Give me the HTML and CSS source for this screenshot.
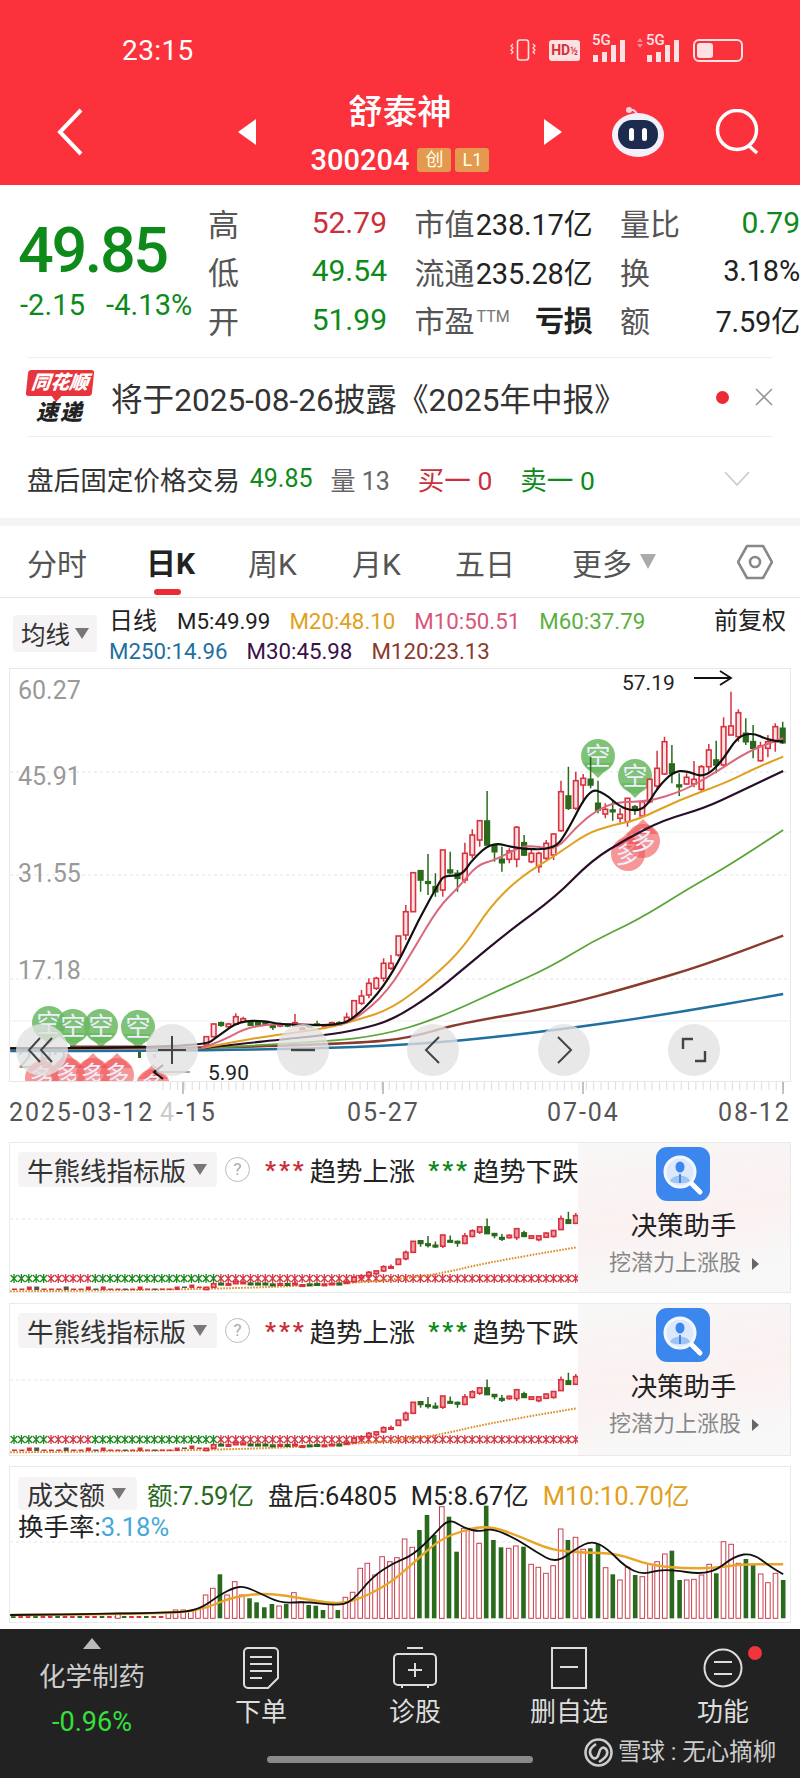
FILE: index.html
```html
<!DOCTYPE html>
<html lang="zh-CN">
<head>
  <meta charset="UTF-8">
  <title>舒泰神 300204</title>
  <link rel="stylesheet" href="styles.css">
</head>
<body>
<div class="screen">

  <header class="topbar">
    <div class="status">
      <span class="clock">23:15</span>
      <div class="status-icons">
        <svg width="26" height="24" viewBox="0 0 26 24" fill="none" stroke="#fde2e4" stroke-width="1.6"><rect x="7.5" y="2" width="11" height="20" rx="2.5"/><path d="M3 6l-2 2 2 2-2 2 2 2-2 2M23 6l2 2-2 2 2 2-2 2 2 2" stroke-width="1.2"/></svg>
        <span class="hd">HD<small>½</small></span>
        <div class="signal"><b>5G</b><i class="b1"></i><i class="b2"></i><i class="b3"></i><i class="b4"></i></div>
        <div class="signal second"><b>5G</b><i class="b1"></i><i class="b2"></i><i class="b3"></i><i class="b4"></i></div>
        <div class="battery"><span></span></div>
      </div>
    </div>
    <div class="nav">
      <div class="back"><svg width="28" height="48" viewBox="0 0 28 48" fill="none" stroke="#fff" stroke-width="4"><path d="M25 2L4 24l21 22"/></svg></div>
      <svg width="18" height="26" viewBox="0 0 18 26"><path d="M18 0v26L0 13z" fill="#fff"/></svg>
      <div class="stock">
        <div class="stock-name">舒泰神</div>
        <div class="stock-code">300204<span class="tag">创</span><span class="tag">L1</span></div>
      </div>
      <svg width="18" height="26" viewBox="0 0 18 26"><path d="M0 0v26l18-13z" fill="#fff"/></svg>
      <div class="nav-right">
        <svg width="56" height="52" viewBox="0 0 56 52"><path d="M27 9c-1-4-4-6-7-5" stroke="#f6d5da" stroke-width="2" fill="none"/><circle cx="19" cy="4" r="3" fill="#f6d5da"/><ellipse cx="28" cy="29" rx="26" ry="22" fill="#f3f0fb"/><rect x="8" y="14" width="40" height="29" rx="14" fill="#1c2b4e"/><rect x="19" y="22" width="5" height="13" rx="2.5" fill="#fff"/><rect x="32" y="22" width="5" height="13" rx="2.5" fill="#fff"/></svg>
        <svg width="46" height="46" viewBox="0 0 46 46" fill="none" stroke="#fff" stroke-width="3.5"><circle cx="22" cy="21" r="19.5"/><path d="M33 36l9 8"/></svg>
      </div>
    </div>
  </header>

  <section class="quote">
    <div class="price">
      <div class="price-now">49.85</div>
      <div class="price-change"><span>-2.15</span><span>-4.13%</span></div>
    </div>
    <div class="stats">
      <div class="stat"><span class="label big">高</span><span class="val red">52.79</span></div>
      <div class="stat"><span class="label">市值</span><span class="num">238.17亿</span></div>
      <div class="stat"><span class="label">量比</span><span class="val green">0.79</span></div>
      <div class="stat"><span class="label big">低</span><span class="val green">49.54</span></div>
      <div class="stat"><span class="label">流通</span><span class="num">235.28亿</span></div>
      <div class="stat"><span class="label">换</span><span class="num">3.18%</span></div>
      <div class="stat"><span class="label big">开</span><span class="val green">51.99</span></div>
      <div class="stat"><span class="label">市盈<sup>TTM</sup></span><span class="num loss">亏损</span></div>
      <div class="stat"><span class="label">额</span><span class="num">7.59亿</span></div>
    </div>
  </section>

  <section class="notice">
    <div class="notice-logo">
      <div class="logo-top">同花顺</div>
      <div class="logo-bottom">速递</div>
    </div>
    <div class="notice-text">将于2025-08-26披露《2025年中报》</div>
    <span class="red-dot"></span>
    <svg width="18" height="18" viewBox="0 0 18 18" stroke="#999" stroke-width="1.6"><path d="M1 1l16 16M17 1L1 17"/></svg>
  </section>

  <section class="afterhours">
    <span class="ah-title">盘后固定价格交易</span>
    <span class="ah-num green">49.85</span>
    <span class="ah-vol">量 13</span>
    <span class="ah-buy">买一 0</span>
    <span class="ah-sell">卖一 0</span>
    <svg width="26" height="16" viewBox="0 0 26 16" fill="none" stroke="#ccc" stroke-width="1.8"><path d="M1 1l12 13L25 1"/></svg>
  </section>

  <nav class="tabs">
    <span>分时</span>
    <span class="tab-active">日K</span>
    <span>周K</span>
    <span>月K</span>
    <span>五日</span>
    <span class="tab-more">更多<i class="caret"></i></span>
    <svg width="36" height="36" viewBox="0 0 36 36" fill="none" stroke="#888" stroke-width="2.6" stroke-linejoin="round"><path d="M10 2h16l9 16-9 16H10L1 18z"/><circle cx="18" cy="18" r="5"/></svg>
  </nav>

  <section class="legend">
    <div class="chip">均线<i class="caret small"></i></div>
    <div class="legend-rows">
      <div class="legend-row">
        <span class="legend-title">日线</span><span>M5:49.99</span><span class="c-m20">M20:48.10</span><span class="c-m10">M10:50.51</span><span class="c-m60">M60:37.79</span><span class="adjust">前复权</span>
      </div>
      <div class="legend-row">
        <span class="c-m250">M250:14.96</span><span class="c-m30">M30:45.98</span><span class="c-m120">M120:23.13</span>
      </div>
    </div>
  </section>

  <section class="chart">
    <svg id="kline" width="780" height="412" viewBox="10 669 780 412"></svg>
    <div class="chart-buttons">
      <div class="round-btn"><svg width="30" height="30" viewBox="0 0 30 30" fill="none" stroke="#444" stroke-width="2"><path d="M13 3L2 15l11 12M25 3L14 15l11 12"/></svg></div>
      <div class="round-btn"><svg width="30" height="30" viewBox="0 0 30 30" fill="none" stroke="#444" stroke-width="2"><path d="M15 1v28M1 15h28"/></svg></div>
      <div class="round-btn"><svg width="30" height="30" viewBox="0 0 30 30" fill="none" stroke="#444" stroke-width="2.4"><path d="M3 15h24"/></svg></div>
      <div class="round-btn"><svg width="30" height="30" viewBox="0 0 30 30" fill="none" stroke="#444" stroke-width="2"><path d="M21 2L8 15l13 13"/></svg></div>
      <div class="round-btn"><svg width="30" height="30" viewBox="0 0 30 30" fill="none" stroke="#444" stroke-width="2"><path d="M9 2l13 13L9 28"/></svg></div>
      <div class="round-btn"><svg width="30" height="30" viewBox="0 0 30 30" fill="none" stroke="#444" stroke-width="2.4"><path d="M14 4H4v10M16 26h10V16"/></svg></div>
    </div>
  </section>
  <svg id="ticks" class="ticks" width="800" height="13" viewBox="0 0 800 13"></svg>
  <div class="dates">
    <span>2025-03-12</span><span><em>4</em>-15</span><span>05-27</span><span>07-04</span><span>08-12</span>
  </div>

  <section class="panel">
    <svg class="indicator" width="570" height="149" viewBox="0 0 570 149"></svg>
    <div class="panel-head">
      <div class="chip">牛熊线指标版<i class="caret small"></i></div>
      <span class="help">?</span>
      <span class="stars red">***</span><span>趋势上涨</span>
      <span class="stars green">***</span><span>趋势下跌</span>
    </div>
    <aside class="promo">
      <svg width="54" height="54" viewBox="0 0 54 54" class="promo-icon"><rect width="54" height="54" rx="11" fill="#3c87ee"/><circle cx="24" cy="25" r="15" fill="#dbe9fb" stroke="#f4f8fe" stroke-width="3"/><ellipse cx="24" cy="20" rx="4.5" ry="5.5" fill="#3c87ee"/><path d="M14 34c2-7 18-7 20 0-3 3-17 3-20 0z" fill="#9dc2f3"/><path d="M24 27v9" stroke="#3c87ee" stroke-width="2"/><path d="M36 37l8 8" stroke="#fff" stroke-width="5" stroke-linecap="round"/></svg>
      <div class="promo-title">决策助手</div>
      <div class="promo-sub">挖潜力上涨股<i class="arrow-r"></i></div>
    </aside>
  </section>

  <section class="panel tall">
    <svg class="indicator" width="570" height="151" viewBox="0 0 570 151"></svg>
    <div class="panel-head">
      <div class="chip">牛熊线指标版<i class="caret small"></i></div>
      <span class="help">?</span>
      <span class="stars red">***</span><span>趋势上涨</span>
      <span class="stars green">***</span><span>趋势下跌</span>
    </div>
    <aside class="promo">
      <svg width="54" height="54" viewBox="0 0 54 54" class="promo-icon"><rect width="54" height="54" rx="11" fill="#3c87ee"/><circle cx="24" cy="25" r="15" fill="#dbe9fb" stroke="#f4f8fe" stroke-width="3"/><ellipse cx="24" cy="20" rx="4.5" ry="5.5" fill="#3c87ee"/><path d="M14 34c2-7 18-7 20 0-3 3-17 3-20 0z" fill="#9dc2f3"/><path d="M24 27v9" stroke="#3c87ee" stroke-width="2"/><path d="M36 37l8 8" stroke="#fff" stroke-width="5" stroke-linecap="round"/></svg>
      <div class="promo-title">决策助手</div>
      <div class="promo-sub">挖潜力上涨股<i class="arrow-r"></i></div>
    </aside>
  </section>

  <section class="volume">
    <svg id="vol" width="780" height="155" viewBox="10 1467 780 155"></svg>
    <div class="vol-head">
      <div class="vol-line">
        <div class="chip">成交额<i class="caret small"></i></div>
        <span class="c-amount">额:7.59亿</span><span>盘后:64805</span><span>M5:8.67亿</span><span class="c-m20">M10:10.70亿</span>
      </div>
      <div class="vol-rate">换手率:<span>3.18%</span></div>
    </div>
  </section>

  <footer class="footer">
    <div class="sector">
      <i class="sector-up"></i>
      <div class="sector-name">化学制药</div>
      <div class="sector-pct">-0.96%</div>
    </div>
    <div class="foot-item">
      <svg width="36" height="42" viewBox="0 0 36 42" fill="none" stroke="#ddd" stroke-width="2"><path d="M5 1h26a4 4 0 0 1 4 4v26l-10 10H5a4 4 0 0 1-4-4V5a4 4 0 0 1 4-4z"/><path d="M7 10h22M7 17h22M7 24h22M7 31h12"/></svg>
      <span>下单</span>
    </div>
    <div class="foot-item">
      <svg width="44" height="42" viewBox="0 0 44 42" fill="none" stroke="#ddd" stroke-width="2"><path d="M14 1h16M5 7h34a4 4 0 0 1 4 4v23a4 4 0 0 1-4 4H5a4 4 0 0 1-4-4V11a4 4 0 0 1 4-4zM9 39v2M35 39v2"/><path d="M22 16v14M15 23h14"/></svg>
      <span>诊股</span>
    </div>
    <div class="foot-item">
      <svg width="36" height="42" viewBox="0 0 36 42" fill="none" stroke="#ddd" stroke-width="2"><rect x="1" y="1" width="34" height="40"/><path d="M9 20h18"/></svg>
      <span>删自选</span>
    </div>
    <div class="foot-item">
      <svg width="40" height="42" viewBox="0 0 40 42" fill="none" stroke="#ddd" stroke-width="2"><circle cx="20" cy="21" r="18.5"/><path d="M11 15h18M11 27h18"/></svg>
      <span>功能</span>
      <i class="foot-dot"></i>
    </div>
    <div class="watermark">
      <svg width="29" height="29" viewBox="0 0 29 29" fill="none" stroke="#ccc" stroke-width="2.6"><circle cx="14.5" cy="14.5" r="13"/><path d="M12 6C6 10 4 14 8 19c3 3 6 1 7-4s4-7 7-4c3 4 1 8-7 13"/></svg>
      <span>雪球 : 无心摘柳</span>
    </div>
    <div class="home-bar"></div>
  </footer>

</div>
<script src="chart.js"></script>
</body>
</html>
```

FILE: styles.css
```css
* {
  box-sizing: border-box;
}

body {
  margin: 0;
  background: #fff;
  color: #222;
  font-family: Roboto, "Noto Sans CJK SC", sans-serif;
}

.screen {
  width: 800px;
  height: 1778px;
  overflow: hidden;
  position: relative;
}

i {
  font-style: normal;
}

.red { color: #c9303a; }
.green { color: #0d8a1a; }

/* top bar */
.topbar {
  height: 185px;
  background: #fb313b;
  color: #fff;
}

.status {
  height: 100px;
  display: flex;
  align-items: center;
  justify-content: space-between;
  padding: 0 57px 0 122px;
}

.clock {
  font-size: 28px;
  letter-spacing: 0.4px;
}

.status-icons {
  display: flex;
  align-items: center;
  gap: 13px;
  color: #fde2e4;
}

.hd {
  width: 31px;
  height: 21px;
  background: #fde2e4;
  color: #d8303a;
  border-radius: 3px;
  font-size: 14px;
  font-weight: 700;
  line-height: 21px;
  text-align: center;
  white-space: nowrap;
}

.hd small {
  font-size: 10px;
}

.signal {
  position: relative;
  width: 34px;
  height: 24px;
  display: flex;
  align-items: flex-end;
  gap: 4.5px;
}

.signal b {
  position: absolute;
  left: -1px;
  top: -5px;
  font-size: 15px;
  line-height: 15px;
  font-weight: 500;
}

.signal i {
  width: 4.5px;
  background: #fde2e4;
}

.signal.second {
  margin-left: 7px;
}

.signal.second::before,
.signal.second::after {
  content: "";
  position: absolute;
  left: -10px;
  border-left: 3px solid transparent;
  border-right: 3px solid transparent;
}

.signal.second::before {
  top: 0;
  border-bottom: 4px solid #f58a90;
}

.signal.second::after {
  top: 6px;
  border-top: 4px solid #f58a90;
}

.b1 { height: 7px; }
.b2 { height: 10px; }
.b3 { height: 17px; }
.b4 { height: 22px; }

.battery {
  width: 50px;
  height: 23px;
  border: 2px solid #fde2e4;
  border-radius: 6px;
  padding: 2px;
  margin-left: -1px;
}

.battery span {
  display: block;
  width: 16px;
  height: 15px;
  background: #fde2e4;
  border-radius: 3px;
}

.nav {
  height: 85px;
  padding-bottom: 22px;
  display: grid;
  grid-template-columns: 238px 18px 288px 18px 1fr;
  grid-template-rows: 63px;
  align-items: center;
}

.back {
  padding-left: 56px;
  display: flex;
}

.stock {
  text-align: center;
  margin-top: 5px;
}

.stock-name {
  font-size: 34.5px;
  line-height: 44px;
  font-weight: 500;
}

.stock-code {
  font-size: 29px;
  line-height: 36px;
  font-weight: 500;
  display: flex;
  justify-content: center;
  align-items: center;
  gap: 4px;
  margin-top: 8px;
}

.tag {
  width: 34px;
  height: 24px;
  background: #e39a4f;
  border-radius: 3px;
  color: #ffe;
  font-size: 18px;
  font-weight: 400;
  line-height: 24px;
  text-align: center;
}

.tag:first-of-type {
  margin-left: 4px;
}

.nav-right {
  display: flex;
  align-items: center;
  gap: 49px;
  margin-left: 48px;
}

/* quote */
.quote {
  height: 172px;
  display: flex;
  padding: 13px 0 0 18px;
}

.price {
  width: 190px;
  color: #0d8a1a;
  flex: none;
}

.price-now {
  font-size: 63px;
  line-height: 70px;
  letter-spacing: -2.4px;
  font-weight: 500;
  margin-top: 18px;
}

.price-change {
  font-size: 29px;
  line-height: 34px;
  display: flex;
  gap: 21px;
  margin: 2px 0 0 2px;
  white-space: nowrap;
  letter-spacing: 0.1px;
}

.stats {
  width: 592px;
  display: grid;
  grid-template-columns: 179px 178px 180px;
  grid-auto-rows: 48.5px;
  column-gap: 27.5px;
}

.stat {
  display: flex;
  justify-content: space-between;
  align-items: center;
  white-space: nowrap;
}

.label {
  font-size: 30px;
  color: #555;
}

.label.big {
  font-size: 31px;
}

.label sup {
  font-size: 16px;
  color: #777;
  vertical-align: 10px;
  line-height: 0;
  margin-left: 2px;
}

.val {
  font-size: 30px;
}

.num {
  font-size: 29px;
  color: #222;
  letter-spacing: -0.2px;
}

.num.loss {
  font-weight: 700;
  font-size: 29px;
}

/* notice */
.notice {
  height: 80px;
  margin: 0 27px;
  border-top: 1px solid #eee;
  border-bottom: 1px solid #eee;
  display: flex;
  align-items: center;
}

.notice-logo {
  width: 66px;
  text-align: center;
  font-style: italic;
  font-weight: 900;
  margin-right: 18px;
}

.logo-top {
  height: 26px;
  background: #e8343c;
  color: #fff;
  font-size: 19px;
  line-height: 26px;
  border-radius: 3px;
  transform: skewX(-6deg);
  position: relative;
}

.logo-top::after {
  content: "";
  position: absolute;
  left: 26px;
  top: 26px;
  border-left: 5px solid transparent;
  border-right: 5px solid transparent;
  border-top: 6px solid #e8343c;
}

.logo-bottom {
  font-size: 22px;
  line-height: 25px;
  color: #222;
  margin-top: 4px;
  letter-spacing: 2px;
}

.notice-text {
  font-size: 31.6px;
  color: #333;
  flex: 1;
  white-space: nowrap;
}

.red-dot {
  width: 13px;
  height: 13px;
  border-radius: 50%;
  background: #ea2b33;
  margin-right: 26px;
}

/* after hours row */
.afterhours {
  height: 89px;
  display: flex;
  align-items: center;
  padding: 2px 50px 0 27px;
  font-size: 25px;
  white-space: nowrap;
  color: #333;
  border-bottom: 8px solid #f4f4f4;
}

.ah-title {
  font-size: 26.6px;
  margin-right: 10px;
}

.ah-num {
  margin-right: 18px;
}

.ah-vol {
  color: #666;
  margin-right: 28px;
}

.ah-buy {
  font-size: 26.5px;
  color: #c9303a;
  margin-right: 28px;
}

.ah-sell {
  font-size: 26.5px;
  color: #0d8a1a;
  margin-right: auto;
}

/* tabs */
.tabs {
  height: 72px;
  border-bottom: 1px solid #e6e6e6;
  padding: 0 0 0 27px;
  display: grid;
  grid-template-columns: 119px 102px 104px 103px 117px 165px 36px;
  align-items: center;
  font-size: 30px;
  color: #555;
  position: relative;
}

.tab-active {
  font-weight: 700;
  color: #222;
  position: relative;
  padding-bottom: 1px;
}

.tab-active::after {
  content: "";
  position: absolute;
  left: 8px;
  top: 50px;
  width: 27px;
  height: 6px;
  background: #ea2b33;
  border-radius: 3px;
}

.tab-more {
  display: flex;
  align-items: center;
}

.caret {
  display: inline-block;
  width: 0;
  height: 0;
  border-left: 8px solid transparent;
  border-right: 8px solid transparent;
  border-top: 15px solid #aaa;
  margin-left: 8px;
}

.caret.small {
  border-left-width: 7px;
  border-right-width: 7px;
  border-top: 11px solid #777;
  margin-left: 7px;
}

/* MA legend */
.legend {
  height: 70px;
  display: flex;
  padding: 0 14px 0 13px;
}

.chip {
  display: inline-flex;
  align-items: center;
  background: #f5f3f3;
  border-radius: 4px;
  color: #333;
  font-size: 25px;
  white-space: nowrap;
}

.legend > .chip {
  width: 84px;
  height: 37px;
  margin-top: 17px;
  padding-left: 8px;
  flex: none;
  margin-right: 12px;
  font-size: 24.5px;
}

.legend > .chip .caret {
  margin-left: 5px;
}

.legend-rows {
  flex: 1;
  padding-top: 8px;
}

.legend-row {
  display: flex;
  gap: 19px;
  font-size: 22.3px;
  line-height: 30px;
  white-space: nowrap;
}

.legend-title {
  font-size: 24px;
  margin-right: 1px;
}

.legend-row .adjust {
  margin-left: auto;
  font-size: 24px;
}

.c-m20 { color: #e0a020; }
.c-m10 { color: #d9557a; }
.c-m60 { color: #5bb040; }
.c-m250 { color: #1f6f9f; }
.c-m30 { color: #3a1248; }
.c-m120 { color: #8c3a2d; }
.c-amount { color: #2a6a1c; }

/* main chart */
.chart {
  height: 414px;
  margin: 0 9px;
  border: 1px solid #e8e8e8;
  position: relative;
  background: #fff;
}

.chart svg {
  display: block;
}

.chart-buttons {
  position: absolute;
  left: 6px;
  top: 355px;
  display: flex;
  gap: 78.4px;
}

.round-btn {
  width: 52px;
  height: 52px;
  border-radius: 50%;
  background: rgba(226, 226, 226, 0.78);
  display: flex;
  align-items: center;
  justify-content: center;
}

.ticks {
  display: block;
}

.dates {
  height: 35px;
  padding-left: 9px;
  display: grid;
  grid-template-columns: 151px 187px 200px 171px auto;
  align-items: center;
  font-size: 25px;
  letter-spacing: 1.9px;
  color: #555;
  margin-bottom: 12px;
}

.dates em {
  font-style: normal;
  color: #ccc;
}

/* indicator panels */
.panel {
  height: 151px;
  margin: 0 9px 10px;
  border: 1px solid #eaeaea;
  position: relative;
}

.panel.tall {
  height: 153px;
}

.indicator {
  display: block;
}

.panel-head {
  position: absolute;
  left: 8px;
  top: 7px;
  display: flex;
  align-items: center;
  font-size: 26.4px;
  color: #222;
  white-space: nowrap;
}

.panel-head .chip {
  width: 199px;
  height: 35px;
  padding-left: 9px;
  font-size: 26.5px;
}

.help {
  width: 25px;
  height: 25px;
  border: 1.5px solid #bbb;
  border-radius: 50%;
  color: #aaa;
  font-size: 17px;
  line-height: 22px;
  text-align: center;
  margin: 0 15px 0 8px;
}

.stars {
  font-size: 24px;
  letter-spacing: 3px;
  font-weight: 700;
  line-height: 20px;
  margin-right: 3px;
}

.stars.green {
  margin-left: 13px;
}

.promo {
  position: absolute;
  right: 0;
  top: 0;
  bottom: 0;
  width: 212px;
  background: linear-gradient(170deg, #f8f7f7 0%, #fbf1f1 50%, #f8f8f8 85%);
  text-align: center;
  padding-top: 4px;
}

.promo-icon {
  display: block;
  margin: 0 auto 7px 78px;
}

.promo-title {
  font-size: 26.4px;
  line-height: 36px;
  color: #222;
  padding-right: 1px;
}

.promo-sub {
  font-size: 22px;
  line-height: 38px;
  color: #888;
  white-space: nowrap;
}

.arrow-r {
  display: inline-block;
  width: 0;
  height: 0;
  border-top: 6px solid transparent;
  border-bottom: 6px solid transparent;
  border-left: 7px solid #666;
  margin-left: 11px;
}

/* volume */
.volume {
  height: 157px;
  margin: 0 9px 6px;
  border: 1px solid #eaeaea;
  position: relative;
}

.volume svg {
  display: block;
}

.vol-head {
  position: absolute;
  left: 8px;
  top: 8px;
  font-size: 25.5px;
  color: #222;
  white-space: nowrap;
}

.vol-line {
  display: flex;
  align-items: center;
  gap: 14px;
}

.vol-line .chip {
  width: 119px;
  height: 33px;
  padding-left: 9px;
  font-size: 26px;
  margin-right: -4px;
}

.vol-rate {
  line-height: 28px;
  margin-top: 1px;
}

.vol-rate span {
  color: #45a8d8;
}

/* footer */
.footer {
  height: 149px;
  background: #222;
  color: #ddd;
  display: grid;
  grid-template-columns: 184px repeat(4, 1fr);
  position: relative;
}

.sector {
  display: flex;
  flex-direction: column;
  align-items: center;
  padding-top: 9px;
}

.sector-up {
  width: 0;
  height: 0;
  border-left: 9px solid transparent;
  border-right: 9px solid transparent;
  border-bottom: 11px solid #bbb;
}

.sector-name {
  font-size: 26.5px;
  line-height: 36px;
  margin-top: 10px;
  color: #ccc;
}

.sector-pct {
  font-size: 27px;
  line-height: 36px;
  margin-top: 9px;
  color: #36e03a;
}

.foot-item {
  display: flex;
  flex-direction: column;
  align-items: center;
  padding-top: 18px;
  position: relative;
  font-size: 26px;
}

.foot-item span {
  line-height: 38px;
  margin-top: 4px;
}

.foot-dot {
  position: absolute;
  left: 102px;
  top: 17px;
  width: 14px;
  height: 14px;
  border-radius: 50%;
  background: #f0353d;
}

.watermark {
  position: absolute;
  left: 584px;
  top: 108px;
  display: flex;
  align-items: center;
  gap: 5px;
  font-size: 23.5px;
  line-height: 30px;
  color: #ccc;
  white-space: nowrap;
}

.home-bar {
  position: absolute;
  left: 267px;
  top: 127px;
  width: 266px;
  height: 7px;
  border-radius: 4px;
  background: #8a8a8a;
}
```

FILE: chart.js
```js
// candles right of the flat start: [high, top, bottom, low, up?] y in 1/3 px from chart origin
const candles = [
  [1098,1100,1125,1130,1],[1060,1062,1100,1102,1],[1055,1058,1066,1070,0],[1058,1062,1070,1072,1],
  [1030,1040,1062,1064,1],[1040,1046,1055,1058,1],[1052,1056,1066,1068,0],[1054,1058,1065,1068,0],
  [1055,1058,1062,1064,0],[1062,1066,1072,1080,0],[1058,1062,1068,1072,1],[1060,1062,1068,1072,0],
  [1032,1058,1068,1070,1],[1070,1074,1078,1080,1],[1064,1066,1069,1070,0],[1052,1062,1066,1068,0],
  [1064,1066,1070,1072,1],[1055,1058,1068,1070,1],[1054,1058,1064,1066,0],[1028,1042,1056,1060,1],
  [990,992,1040,1045,1],[960,978,1000,1005,1],[925,940,975,985,1],[920,925,955,960,1],
  [865,880,925,935,1],[855,880,895,900,1],[798,798,855,860,1],[705,725,795,810,1],
  [608,608,725,725,1],[600,602,630,665,0],[552,635,640,675,0],[610,650,665,680,0],
  [540,540,660,680,1],[545,600,608,612,0],[600,610,625,665,0],[518,550,630,640,1],
  [478,495,555,565,1],[450,452,510,530,1],[363,453,525,525,0],[525,525,545,575,0],
  [530,568,578,605,0],[535,543,568,580,1],[468,472,568,592,1],[495,518,555,558,0],
  [540,550,575,580,1],[545,550,590,608,1],[510,520,565,570,1],[490,492,555,570,1],
  [332,365,482,485,1],[290,378,415,420,0],[305,332,415,420,1],[312,325,345,400,1],
  [260,328,345,355,0],[332,400,420,430,0],[400,418,432,445,1],[392,420,425,452,0],
  [415,433,445,458,1],[385,385,455,470,1],[405,410,420,435,0],[390,395,438,440,1],
  [325,328,395,400,1],[242,295,348,360,1],[200,215,312,315,1],[225,282,310,340,0],
  [310,345,350,378,0],[310,322,342,345,1],[273,328,342,352,1],[285,290,358,365,1],
  [222,240,290,305,1],[212,270,285,310,0],[142,170,285,290,1],[65,168,195,195,1],
  [118,128,200,215,1],[145,190,215,225,0],[165,215,235,265,0],[215,228,272,275,1],
  [195,215,235,262,1],[160,170,215,245,1],[155,175,218,222,0]
];

const STEP = 7.39;
const candleX = i => 782.7 - (candles.length - 1 - i) * STEP;
const UP = '#d8323f';
const DOWN = '#2a6a1c';

// traced lines: x is 1.96 per px, y is 3 per px
const lines = [
  ['#1f6f9f', 2.4, [[20,1143],[400,1143],[800,1128],[1070,1085],[1300,1035],[1535,972]]],
  ['#8c3a2d', 2.4, [[20,1135],[395,1135],[700,1120],[800,1105],[900,1060],[1090,1012],[1250,945],[1380,885],[1535,797]]],
  ['#5aa53a', 1.8, [[395,1135],[640,1115],[750,1095],[850,1050],[980,960],[1080,890],[1160,815],[1250,750],[1350,655],[1430,585],[1535,480]]],
  ['#2a0f2a', 2.2, [[395,1135],[540,1110],[640,1095],[700,1080],[770,1050],[850,970],[910,895],[1000,780],[1090,680],[1160,570],[1230,505],[1300,450],[1380,415],[1450,365],[1535,303]]],
  ['#e0a020', 2, [[395,1135],[460,1115],[540,1095],[640,1075],[700,1050],[770,1015],[850,920],[910,830],[960,710],[1020,620],[1090,555],[1150,490],[1200,465],[1250,450],[1330,390],[1420,340],[1480,295],[1535,260]]],
  ['#d9687c', 2, [[395,1135],[440,1110],[480,1075],[530,1062],[600,1062],[660,1068],[700,1045],[760,965],[810,840],[860,710],[900,650],[935,585],[970,570],[1020,530],[1050,528],[1090,540],[1130,470],[1170,420],[1210,395],[1270,395],[1340,362],[1400,310],[1470,240],[1535,205]]],
  ['#111', 2.2, [[20,1135],[395,1135],[430,1095],[470,1052],[520,1053],[545,1062],[600,1065],[660,1065],[690,1050],[740,975],[780,880],[820,750],[860,640],[870,617],[905,617],[925,570],[965,515],[1010,535],[1085,540],[1110,490],[1155,355],[1185,370],[1215,410],[1240,423],[1265,415],[1290,350],[1320,305],[1345,302],[1380,323],[1415,275],[1445,200],[1475,188],[1505,210],[1535,215]]]
];

function smooth(pts) {
  let d = `M${pts[0][0].toFixed(1)} ${pts[0][1].toFixed(1)}`;
  for (let i = 1; i < pts.length - 1; i++) {
    const mx = (pts[i][0] + pts[i + 1][0]) / 2;
    const my = (pts[i][1] + pts[i + 1][1]) / 2;
    d += `Q${pts[i][0].toFixed(1)} ${pts[i][1].toFixed(1)} ${mx.toFixed(1)} ${my.toFixed(1)}`;
  }
  const last = pts[pts.length - 1];
  return d + `L${last[0].toFixed(1)} ${last[1].toFixed(1)}`;
}

function candleSvg(x, c, mapY, w, upFill) {
  const color = c[4] ? UP : DOWN;
  const top = mapY(c[1]);
  const bot = mapY(c[2]);
  const wick = `<path d="M${x} ${mapY(c[0])}V${top}M${x} ${bot}V${mapY(c[3])}" stroke="${color}" stroke-width="1.5"/>`;
  const h = Math.max(bot - top, 1.5);
  const fill = c[4] ? upFill : DOWN;
  return wick + `<rect x="${x - w / 2}" y="${top}" width="${w}" height="${h}" fill="${fill}" stroke="${color}" stroke-width="1.6"/>`;
}

function pin(cx, cy, dir, text) {
  const color = text === '空' ? 'rgba(105,185,95,.85)' : 'rgba(240,85,85,.62)';
  const tip = cy + dir * 22;
  return `<path d="M${cx - 15} ${cy + dir * 7}L${cx} ${tip}L${cx + 15} ${cy + dir * 7}z" fill="${color}"/>` +
    `<circle cx="${cx}" cy="${cy}" r="17" fill="${color}"/>` +
    `<text x="${cx}" y="${cy + 9}" font-size="25" text-anchor="middle" fill="#eef" font-family="Noto Sans CJK SC">${text}</text>`;
}

function drawMain() {
  let s = '';
  [772, 875, 979].forEach(y => {
    s += `<path d="M10 ${y}H790" stroke="#e4e4e4" stroke-dasharray="3 3"/>`;
  });
  s += '<path d="M10 1021H790M610 832H790" stroke="#f0f0f0"/>';
  [['60.27',699],['45.91',785],['31.55',882],['17.18',979],['2.82',1068]].forEach(t => {
    s += `<text x="18" y="${t[1]}" font-size="25" fill="#999" font-family="Roboto">${t[0]}</text>`;
  });

  // pins under the candles
  [[49,1023],[73,1026],[101,1026],[138,1027]].forEach(p => { s += pin(p[0], p[1], 1, '空'); });
  [[42,1078],[68,1075],[93,1075],[117,1075],[153,1086]].forEach(p => { s += pin(p[0], p[1], -1, '多'); });
  [[628,854],[643,841]].forEach(p => { s += pin(p[0], p[1], -1, '多'); });
  [[598,756],[635,776]].forEach(p => { s += pin(p[0], p[1], 1, '空'); });

  const mapY = y => +(670 + y / 3).toFixed(1);
  candles.forEach((c, i) => { s += candleSvg(+candleX(i).toFixed(1), c, mapY, 4.6, '#fbe3e5'); });

  s += `<rect x="138" y="1052" width="3" height="6" fill="${DOWN}"/><rect x="153" y="1054" width="3" height="4" fill="#e9a0a8"/>`;
  s += `<path d="M70 1047H145" stroke="#8c3a2d" stroke-width="3"/>`;
  lines.forEach(l => {
    const pts = l[2].map(p => [p[0] / 1.96, 670 + p[1] / 3]);
    s += `<path d="${smooth(pts)}" fill="none" stroke="${l[0]}" stroke-width="${l[1]}" stroke-linejoin="round"/>`;
  });

  // high and low labels
  s += '<text x="622" y="690" font-size="21" fill="#222" font-family="Roboto">57.19</text>';
  s += '<path d="M694 678H731M720 671l11 7-11 7" fill="none" stroke="#111" stroke-width="1.8"/>';
  s += '<text x="208" y="1080" font-size="21" fill="#222" font-family="Roboto">5.90</text>';
  s += '<path d="M190 1072H154" fill="none" stroke="#888" stroke-width="1.6"/><path d="M163 1065l-9 7 9 7" fill="none" stroke="#111" stroke-width="2"/>';
  document.getElementById('kline').innerHTML = s;
}

function drawTicks() {
  let s = '';
  for (let x = 163; x < 790; x += 7.3) {
    s += `<path d="M${x.toFixed(1)} 0V8" stroke="#ddd"/>`;
  }
  [183, 383, 583, 783].forEach(x => { s += `<path d="M${x} 0V12" stroke="#aaa" stroke-width="1.4"/>`; });
  document.getElementById('ticks').innerHTML = s;
}

function drawIndicator(svg) {
  // local coords: x from panel left edge, y from panel top edge
  const mapY = y => +((262 + (y - 365) * 0.28 - 35) / 3).toFixed(1);
  let s = '<path d="M0 76H570" stroke="#e6e6e6" stroke-dasharray="3 3"/>';

  for (let x = 4; x < 570; x += 7.39) {
    const green = x < 34 || (x >= 79 && x < 204);
    const color = green ? '#1b8a1b' : '#d23a44';
    s += `<path d="M${(x - 3.4).toFixed(1)} 132l6.8 7M${(x + 3.4).toFixed(1)} 132l-6.8 7M${x.toFixed(1)} 131v9" stroke="${color}" stroke-width="1.3"/>`;
  }

  const dotted = [[20,480],[420,475],[700,455],[850,432],[950,395],[1130,348]]
    .map(p => [p[0] / 1.96 - 10, (p[1] - 35) / 3]);
  s += `<path d="${smooth(dotted)}" fill="none" stroke="#d98a20" stroke-width="2" stroke-dasharray="1.6 1.4"/>`;

  for (let i = 0; i < 26; i++) {
    const x = 2 + i * STEP;
    const h = i % 5 === 2 || i % 7 === 3 ? 3.5 : 1.5;
    s += `<rect x="${x.toFixed(1)}" y="${(147 - h - (i > 22 ? 2 : 0)).toFixed(1)}" width="5" height="${h}" fill="${i % 4 === 3 ? '#555' : UP}"/>`;
  }
  candles.forEach((c, i) => {
    const x = +(candleX(i) - 10).toFixed(1);
    if (x < 568) s += candleSvg(x, c, mapY, 4.4, '#ee9aa1');
  });
  svg.innerHTML = s;
}

// volume bars: [x traced, top traced, up?]
const bars = [
  [231,460,1],[330,458,1],[344,450,1],[359,450,1],[374,452,1],[388,448,1],
  [403,405,1],[417,385,1],[431,343,0],[445,405,1],[460,365,1],[474,405,1],[489,415,0],[503,427,0],
  [518,442,0],[533,432,0],[547,438,1],[561,432,0],[576,398,1],[590,425,1],[605,435,0],[619,437,0],
  [633,450,0],[648,432,1],[662,450,0],[677,412,1],[691,397,1],[706,325,1],[720,310,1],[735,345,1],
  [749,290,1],[764,305,1],[778,293,1],[793,237,1],[808,262,1],[822,210,0],[837,165,0],[851,225,0],
  [866,140,1],[880,170,0],[895,275,0],[909,205,1],[924,205,1],[939,250,1],[953,137,0],[967,240,0],
  [982,262,0],[997,265,1],[1011,258,1],[1026,260,0],[1041,313,1],[1055,322,1],[1070,340,1],[1084,317,1],
  [1099,207,1],[1113,240,0],[1128,232,1],[1143,268,1],[1157,265,0],[1172,252,0],[1187,323,1],[1201,343,0],
  [1215,360,1],[1230,322,1],[1245,345,0],[1259,350,1],[1274,313,1],[1288,305,1],[1303,282,1],[1317,272,0],
  [1332,360,0],[1346,360,1],[1360,358,1],[1375,345,1],[1390,313,1],[1404,340,0],[1418,245,1],[1433,253,1],
  [1447,310,1],[1462,297,0],[1476,313,0],[1491,342,1],[1505,368,1],[1520,340,1],[1535,360,0]
];

const volBlack = [[20,465],[330,460],[390,450],[430,405],[460,382],[480,380],[510,400],[550,430],[600,425],[660,437],[690,425],[730,350],[770,310],[810,285],[850,225],[880,175],[910,205],[940,215],[965,205],[1010,235],[1050,275],[1090,310],[1130,265],[1160,242],[1190,265],[1225,320],[1260,345],[1300,325],[1390,347],[1440,287],[1475,280],[1510,320],[1535,343]];
const volOrange = [[20,465],[330,462],[400,447],[440,420],[480,405],[530,400],[590,415],[660,432],[700,420],[760,375],[810,310],[860,240],[910,210],[960,197],[1020,230],[1080,270],[1140,278],[1210,280],[1270,315],[1340,325],[1400,325],[1450,312],[1535,313]];

function drawVolume() {
  const mapY = y => 1460 + y / 3;
  let s = '<path d="M10 1542H790" stroke="#e6e6e6" stroke-dasharray="3 3"/>';
  for (let i = 0; i < 44; i++) {
    const x = 11 + i * STEP;
    if (x < 190) s += `<rect x="${x.toFixed(1)}" y="1616" width="4.6" height="2" fill="${i % 3 ? UP : '#2a6a1c'}"/>`;
  }
  bars.forEach(b => {
    const x = (b[0] / 1.96 - 2.3).toFixed(1);
    const y = mapY(b[1]);
    const h = mapY(475) - y;
    if (b[2]) {
      s += `<rect x="${x}" y="${y.toFixed(1)}" width="4.6" height="${h.toFixed(1)}" fill="#fff" stroke="#c8404f" stroke-width="1"/>`;
    } else {
      s += `<rect x="${x}" y="${y.toFixed(1)}" width="4.6" height="${h.toFixed(1)}" fill="${DOWN}"/>`;
    }
  });
  [[volOrange, '#e8a52a', 2.4], [volBlack, '#111', 1.8]].forEach(l => {
    const pts = l[0].map(p => [p[0] / 1.96, mapY(p[1])]);
    s += `<path d="${smooth(pts)}" fill="none" stroke="${l[1]}" stroke-width="${l[2]}"/>`;
  });
  document.getElementById('vol').innerHTML = s;
}

drawMain();
drawTicks();
document.querySelectorAll('.indicator').forEach(drawIndicator);
drawVolume();
```
